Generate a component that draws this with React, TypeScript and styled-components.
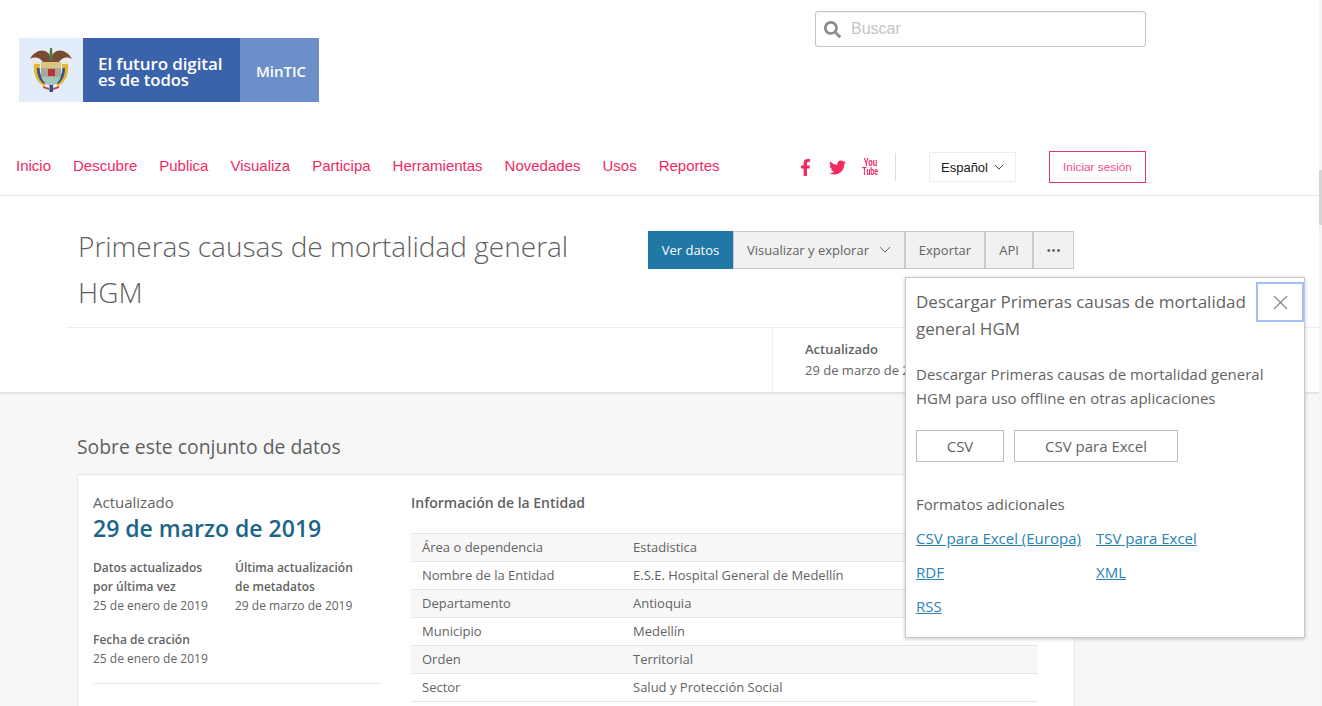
import React from "react";
import styled, { createGlobalStyle } from "styled-components";
import { FaFacebookF, FaTwitter, FaSearch } from "react-icons/fa";

const Global = createGlobalStyle`
  html, body { margin: 0; padding: 0; height: 100%; overflow: hidden; background: #fff; }
  body { font-family: "Open Sans", "Liberation Sans", sans-serif; color: #636363; }
  * { box-sizing: border-box; }
`;

const Page = styled.div`
  position: relative;
  width: 1322px;
  height: 706px;
  overflow: hidden;
  background: #fff;
`;

const Scrollbar = styled.div`
  position: absolute;
  top: 0;
  right: 0;
  width: 3px;
  height: 706px;
  background: #f4f4f4;
  &::after {
    content: "";
    position: absolute;
    top: 170px;
    left: 0;
    width: 3px;
    height: 55px;
    background: #d6d6d6;
  }
`;

const Header = styled.header`
  height: 196px;
  border-bottom: 1px solid #e6e6e6;
  width: 1319px;
  font-family: "Liberation Sans", Arial, sans-serif;
`;

const TopRow = styled.div`
  height: 140px;
  display: grid;
  grid-template-columns: 300px 331px;
  column-gap: 496px;
  padding: 11px 0 0 19px;
  align-items: start;
`;

const Logo = styled.div`
  margin-top: 27px;
  width: 300px;
  height: 64px;
  display: grid;
  grid-template-columns: 64px 157px 79px;
  font-family: "Open Sans", sans-serif;
  color: #fff;
`;

const LogoShield = styled.div`
  background: #e3edf9;
  display: flex;
  align-items: center;
  justify-content: center;
  svg {
    filter: blur(0.35px);
  }
`;

const LogoSlogan = styled.div`
  background: #3b63ab;
  font-size: 17px;
  font-weight: 600;
  line-height: 16px;
  letter-spacing: -0.1px;
  white-space: nowrap;
  display: flex;
  flex-direction: column;
  justify-content: center;
  padding: 4px 0 0 15px;
`;

const LogoSecondLine = styled.span`
  font-size: 16.7px;
`;

const LogoMin = styled.div`
  background: #6c8fc9;
  font-size: 15px;
  font-weight: 600;
  display: flex;
  align-items: center;
  padding-left: 16px;
  padding-top: 1px;
`;

const Search = styled.div`
  height: 36px;
  border: 1px solid #c4c4c4;
  border-radius: 3px;
  display: flex;
  align-items: center;
  padding-left: 8px;
  gap: 10px;
  color: #8a8a8a;
  font-size: 16px;
  box-shadow: inset 0 1px 2px rgba(0, 0, 0, 0.06);
`;

const Placeholder = styled.span`
  color: #c4c4c4;
`;

const NavRow = styled.div`
  height: 54px;
  display: flex;
  align-items: center;
  padding-left: 16px;
`;

const NavLinks = styled.nav`
  display: flex;
  gap: 22px;
  width: 781px;
  padding-bottom: 4px;
`;

const NavLink = styled.a`
  color: #f2295f;
  font-size: 15px;
  white-space: nowrap;
`;

const Social = styled.div`
  display: flex;
  align-items: center;
  gap: 15px;
  color: #f2295f;
  width: 99px;
  height: 28px;
  border-right: 1px solid #ead7dd;
`;

const YouTubeMark = styled.span`
  display: flex;
  flex-direction: column;
  align-items: center;
  width: 16px;
  font-family: "Roboto", "Liberation Sans", sans-serif;
  font-weight: 700;
  line-height: 9px;
  margin-left: 1px;
`;

const YouWord = styled.span`
  font-size: 11px;
  transform: scaleX(0.72);
`;

const TubeWord = styled.span`
  font-size: 10px;
  transform: scaleX(0.7);
`;

const LangButton = styled.div`
  margin-left: 33px;
  width: 87px;
  height: 30px;
  border: 1px solid #ececec;
  display: flex;
  align-items: center;
  justify-content: center;
  gap: 6px;
  font-size: 13px;
  color: #1a1a1a;
`;

const Login = styled.a`
  margin-left: 33px;
  width: 97px;
  height: 32px;
  border: 1px solid #e8336d;
  display: flex;
  align-items: center;
  justify-content: center;
  font-size: 11.8px;
  color: #f2507f;
`;

const TitleSection = styled.section`
  width: 1320px;
  height: 198px;
  border-right: 1px solid #e6e6e6;
  border-bottom: 2px solid #e3e3e3;
`;

const TitleRow = styled.div`
  height: 131px;
  display: flex;
  padding: 27px 0 0 78px;
`;

const Title = styled.h1`
  margin: 0 70px 0 0;
  width: 500px;
  font-size: 28px;
  line-height: 46px;
  font-weight: 300;
  color: #5f5f5f;
`;

const Toolbar = styled.div`
  display: flex;
  height: 38px;
  margin-top: 8px;
`;

const ToolButton = styled.button<{ $primary?: boolean; $w: number }>`
  width: ${(p) => p.$w}px;
  height: 38px;
  padding: 0;
  font: 400 13px "Open Sans", sans-serif;
  color: ${(p) => (p.$primary ? "#fff" : "#636363")};
  background: ${(p) => (p.$primary ? "#1f78a6" : "#f1f1f1")};
  border: 1px solid ${(p) => (p.$primary ? "#1f78a6" : "#cacaca")};
  display: flex;
  align-items: center;
  justify-content: center;
  gap: 10px;
`;

const MetaRow = styled.div`
  margin-left: 67px;
  height: 65px;
  border-top: 1px solid #eeeeee;
  display: flex;
  justify-content: flex-start;
  padding-left: 705px;
`;

const MetaCell = styled.div`
  border-left: 1px solid #eeeeee;
  padding: 11px 0 0 32px;
  font-size: 13px;
  line-height: 21px;
  white-space: nowrap;
`;

const MetaLabel = styled.div`
  font-weight: 600;
  line-height: 21px;
`;

const Body = styled.main`
  height: 312px;
  background: #f7f7f7;
  padding: 39px 0 0 77px;
`;

const SectionTitle = styled.h2`
  margin: 0 0 13px;
  font-size: 19.35px;
  line-height: 28px;
  font-weight: 400;
  color: #5f5f5f;
`;

const Card = styled.div`
  width: 998px;
  height: 300px;
  background: #fff;
  border: 1px solid #e8e8e8;
  display: flex;
  padding: 16px 0 0 15px;
`;

const LeftCol = styled.div`
  width: 288px;
  margin-right: 30px;
`;

const UpdatedLabel = styled.div`
  font-size: 15px;
  line-height: 22px;
`;

const UpdatedDate = styled.div`
  font-size: 23px;
  line-height: 30px;
  font-weight: 600;
  color: #1c6488;
  margin-bottom: 15px;
`;

const StatGrid = styled.div`
  display: grid;
  grid-template-columns: 142px 146px;
  row-gap: 15px;
  padding-bottom: 15px;
  border-bottom: 1px solid #e8e8e8;
`;

const Stat = styled.div`
  font-size: 12px;
  line-height: 19px;
`;

const StatLabel = styled.div`
  font-weight: 600;
`;

const RightCol = styled.div`
  width: 627px;
`;

const InfoTitle = styled.h3`
  margin: 0 0 18px;
  font-size: 14px;
  line-height: 24px;
  font-weight: 600;
  color: #5f5f5f;
`;

const Table = styled.div`
  border-top: 1px solid #e5e5e5;
`;

const Row = styled.div<{ $odd: boolean }>`
  height: 28px;
  display: grid;
  grid-template-columns: 211px 1fr;
  align-items: center;
  padding: 0 0 2px 11px;
  font-size: 13px;
  border-bottom: 1px solid #e5e5e5;
  background: ${(p) => (p.$odd ? "#f7f7f7" : "#fff")};
`;

const Popup = styled.aside`
  position: absolute;
  left: 905px;
  top: 277px;
  width: 400px;
  height: 361px;
  background: #fff;
  border: 1px solid #c8c8c8;
  box-shadow: 0 1px 4px rgba(0, 0, 0, 0.22);
  padding: 10px 10px 0;
`;

const PopupHead = styled.div`
  font-size: 17px;
  line-height: 27px;
  width: 340px;
  color: #636363;
`;

const CloseButton = styled.button`
  position: absolute;
  top: 4px;
  right: 0;
  width: 48px;
  height: 40px;
  border: 2px solid #a3c0f5;
  background: #fff;
  padding: 0;
  display: flex;
  align-items: center;
  justify-content: center;
  color: #808080;
`;

const PopupText = styled.p`
  margin: 20px 0 20px;
  font-size: 15px;
  line-height: 24px;
`;

const Downloads = styled.div`
  display: flex;
  gap: 10px;
  margin-bottom: 30px;
`;

const DownloadButton = styled.button<{ $w: number }>`
  width: ${(p) => p.$w}px;
  height: 32px;
  padding: 0;
  background: #fff;
  border: 1px solid #bdbdbd;
  font: 400 15px "Open Sans", sans-serif;
  color: #636363;
`;

const FormatsTitle = styled.div`
  font-size: 15px;
  line-height: 24px;
  margin-bottom: 10px;
`;

const Links = styled.div`
  display: grid;
  grid-template-columns: 180px 1fr;
  row-gap: 10px;
`;

const FormatLink = styled.a`
  font-size: 15px;
  line-height: 24px;
  color: #2a83b5;
  text-decoration: underline;
  justify-self: start;
`;

const nav = ["Inicio", "Descubre", "Publica", "Visualiza", "Participa", "Herramientas", "Novedades", "Usos", "Reportes"];
const rows = [
  ["Área o dependencia", "Estadistica"],
  ["Nombre de la Entidad", "E.S.E. Hospital General de Medellín"],
  ["Departamento", "Antioquia"],
  ["Municipio", "Medellín"],
  ["Orden", "Territorial"],
  ["Sector", "Salud y Protección Social"],
];

const Shield = () => (
  <svg width="44" height="46" viewBox="0 0 44 46">
    <path d="M1 12 C6 3 15 1 20 7 L22 12 L24 7 C29 1 38 3 43 12 C37 9 33 11 30 15 L14 15 C11 11 7 9 1 12Z" fill="#7a4a33" />
    <path d="M21 1 L23 1 L24 13 L20 13Z" fill="#4d7a45" />
    <path d="M4 13 L10 15 L9 18 L3 16Z M40 13 L34 15 L35 18 L41 16Z" fill="#f3e6c4" />
    <path d="M5 17 C4 26 7 35 15 39 L18 36 C12 32 10 25 11 17Z" fill="#e4b52e" />
    <path d="M39 17 C40 26 37 35 29 39 L26 36 C32 32 34 25 33 17Z" fill="#e4b52e" />
    <path d="M8 21 C8 28 10 33 15 37 L16 35 C12 31 11 27 10.500 21Z M36 21 C36 28 34 33 29 37 L28 35 C32 31 33 27 33.500 21Z" fill="#31508f" />
    <path d="M12 15 L32 15 L32 28 C32 34 27 37 22 39 C17 37 12 34 12 28Z" fill="#a9a69a" />
    <rect x="12" y="15" width="20" height="6" fill="#d9c77f" />
    <path d="M19 22 L26 22 L26 29 L19 29Z" fill="#b8323a" />
    <path d="M13 30 L31 30 C30 35 26 37 22 39 C18 37 14 35 13 30Z" fill="#9fc7bd" />
    <path d="M20.500 38 L24 38 L24 45 L20.500 45Z" fill="#2f4f9b" />
    <path d="M14 39 L20 41 L20 43 L14 41Z M30 39 L24 41 L24 43 L30 41Z" fill="#c9463f" />
  </svg>
);

const Chevron = ({ size = 12 }: { size?: number }) => (
  <svg width={size} height={size * 0.6} viewBox="0 0 12 7" fill="none" stroke="currentColor" strokeWidth="1">
    <path d="M1 1 L6 6 L11 1" />
  </svg>
);

export default function App() {
  return (
    <Page>
      <Global />
      <Header>
        <TopRow>
          <Logo>
            <LogoShield>
              <Shield />
            </LogoShield>
            <LogoSlogan>
              <span>El futuro digital</span>
              <LogoSecondLine>es de todos</LogoSecondLine>
            </LogoSlogan>
            <LogoMin>MinTIC</LogoMin>
          </Logo>
          <Search>
            <FaSearch size={17} />
            <Placeholder>Buscar</Placeholder>
          </Search>
        </TopRow>
        <NavRow>
          <NavLinks>
            {nav.map((n) => (
              <NavLink key={n}>{n}</NavLink>
            ))}
          </NavLinks>
          <Social>
            <FaFacebookF size={17} />
            <FaTwitter size={17} />
            <YouTubeMark>
              <YouWord>You</YouWord>
              <TubeWord>Tube</TubeWord>
            </YouTubeMark>
          </Social>
          <LangButton>
            Español <Chevron size={10} />
          </LangButton>
          <Login>Iniciar sesión</Login>
        </NavRow>
      </Header>
      <TitleSection>
        <TitleRow>
          <Title>Primeras causas de mortalidad general HGM</Title>
          <Toolbar>
            <ToolButton $primary $w={85}>Ver datos</ToolButton>
            <ToolButton $w={172}>
              Visualizar y explorar <Chevron size={12} />
            </ToolButton>
            <ToolButton $w={80}>Exportar</ToolButton>
            <ToolButton $w={48}>API</ToolButton>
            <ToolButton $w={41}>•••</ToolButton>
          </Toolbar>
        </TitleRow>
        <MetaRow>
          <MetaCell>
            <MetaLabel>Actualizado</MetaLabel>
            29 de marzo de 2019
          </MetaCell>
        </MetaRow>
      </TitleSection>
      <Body>
        <SectionTitle>Sobre este conjunto de datos</SectionTitle>
        <Card>
          <LeftCol>
            <UpdatedLabel>Actualizado</UpdatedLabel>
            <UpdatedDate>29 de marzo de 2019</UpdatedDate>
            <StatGrid>
              <Stat>
                <StatLabel>Datos actualizados<br />por última vez</StatLabel>
                25 de enero de 2019
              </Stat>
              <Stat>
                <StatLabel>Última actualización<br />de metadatos</StatLabel>
                29 de marzo de 2019
              </Stat>
              <Stat>
                <StatLabel>Fecha de cración</StatLabel>
                25 de enero de 2019
              </Stat>
            </StatGrid>
          </LeftCol>
          <RightCol>
            <InfoTitle>Información de la Entidad</InfoTitle>
            <Table>
              {rows.map(([a, b], i) => (
                <Row key={a} $odd={i % 2 === 0}>
                  <span>{a}</span>
                  <span>{b}</span>
                </Row>
              ))}
            </Table>
          </RightCol>
        </Card>
      </Body>
      <Popup>
        <PopupHead>Descargar Primeras causas de mortalidad general HGM</PopupHead>
        <CloseButton aria-label="Cerrar">
          <svg width="15" height="15" viewBox="0 0 15 15" stroke="currentColor" strokeWidth="1.1" fill="none">
            <path d="M1 1 L14 14 M14 1 L1 14" />
          </svg>
        </CloseButton>
        <PopupText>Descargar Primeras causas de mortalidad general HGM para uso offline en otras aplicaciones</PopupText>
        <Downloads>
          <DownloadButton $w={88}>CSV</DownloadButton>
          <DownloadButton $w={164}>CSV para Excel</DownloadButton>
        </Downloads>
        <FormatsTitle>Formatos adicionales</FormatsTitle>
        <Links>
          <FormatLink>CSV para Excel (Europa)</FormatLink>
          <FormatLink>TSV para Excel</FormatLink>
          <FormatLink>RDF</FormatLink>
          <FormatLink>XML</FormatLink>
          <FormatLink>RSS</FormatLink>
        </Links>
      </Popup>
      <Scrollbar />
    </Page>
  );
}
